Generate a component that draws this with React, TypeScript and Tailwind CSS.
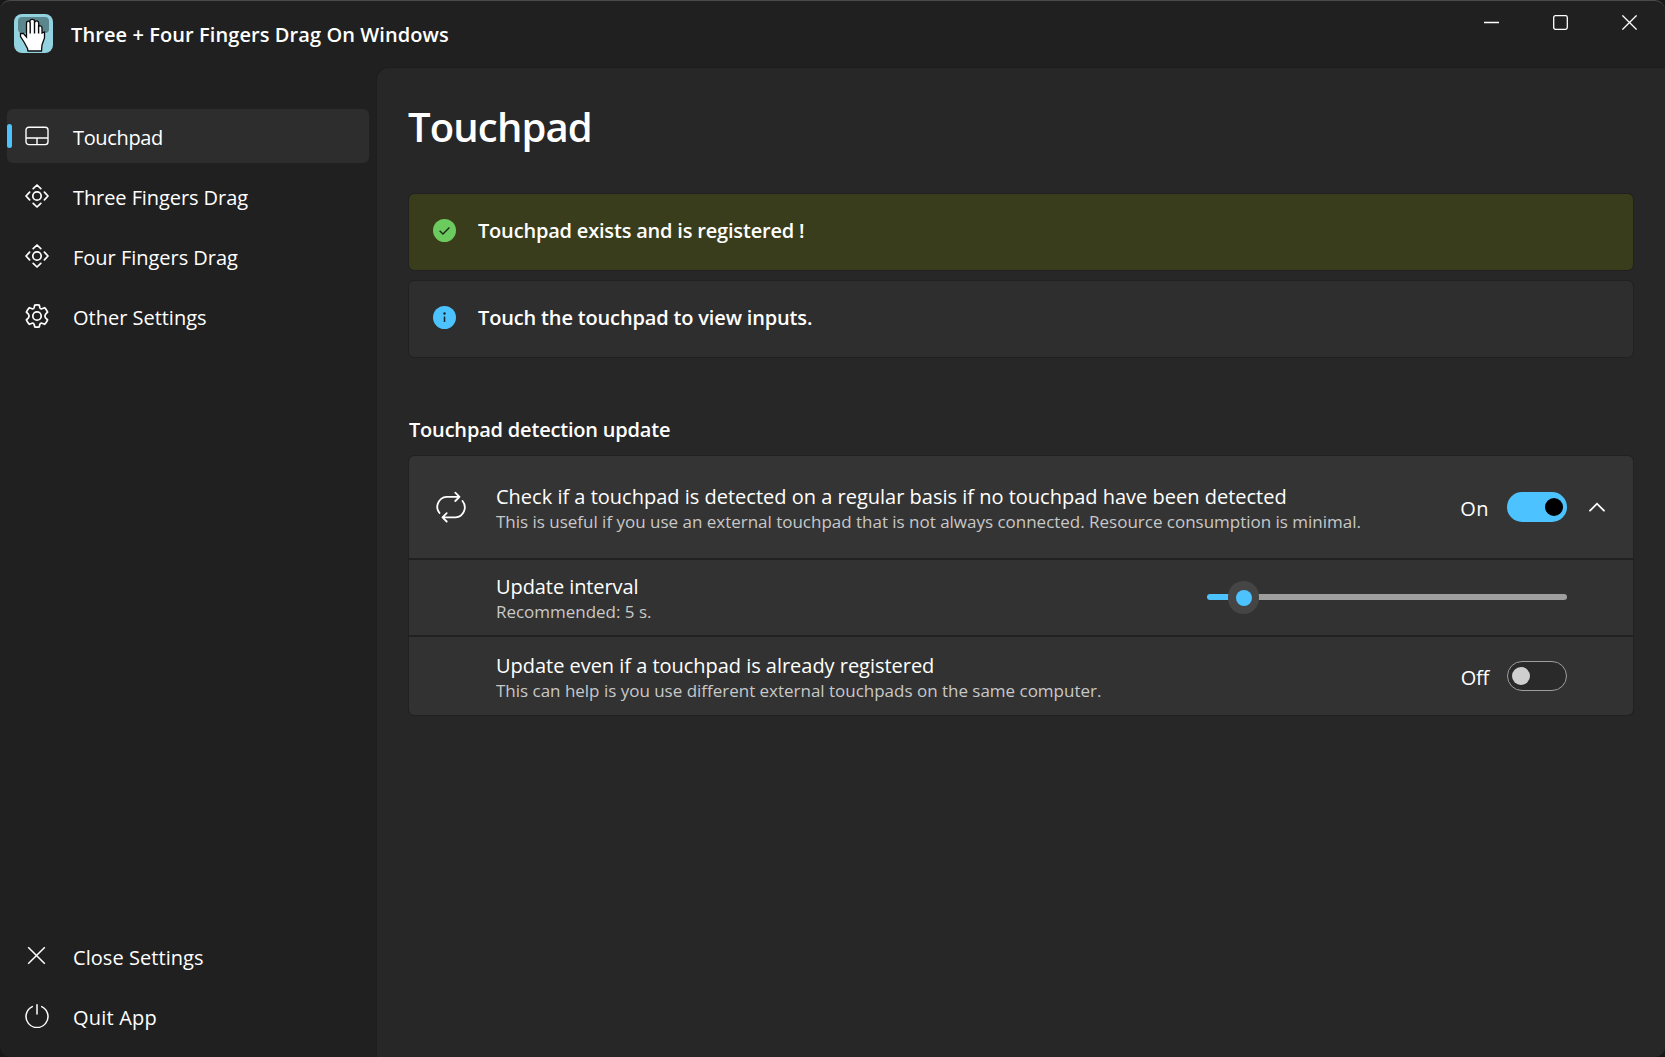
import type { ReactNode } from 'react';

/* ---------- icons ---------- */

function AppLogo() {
  return (
    <svg width="39" height="39" viewBox="0 0 39 39" className="shrink-0">
      <rect width="39" height="39" rx="8" fill="#93d3df" />
      <rect x="4" y="3" width="31" height="16" rx="4" fill="#5b868e" />
      <path
        d="M12.500 22V9.500Q12.500 7.200 14.300 7.200T16 9V7Q16 5.300 18.200 5.300T20.500 7V9Q20.500 6.800 22.500 6.800T24.700 9V12.500Q25 11.500 26.500 11.800T28 14V19L30.500 18V24L28 31L27.500 37H14L13.500 34.500L10 28L6.500 22.500L6.500 19.500H9.500L12.500 23Z"
        fill="#ffffff"
        stroke="#0a0a0a"
        strokeWidth="1.3"
      />
      <path d="M16.200 8.500V19.500M20.500 8.500V19.500M24.600 11V19.500" stroke="#0a0a0a" strokeWidth="1.4" fill="none" />
    </svg>
  );
}

function TouchpadIcon() {
  return (
    <svg width="24" height="24" viewBox="0 0 24 24" fill="none" stroke="#fff" strokeWidth="1.4">
      <rect x="1" y="3.2" width="22" height="17.4" rx="2.8" />
      <path d="M1 14H23M12 14V20.600" />
    </svg>
  );
}

function DragIcon() {
  return (
    <svg width="24" height="24" viewBox="0 0 24 24" fill="none" stroke="#fff" strokeWidth="1.7" strokeLinecap="round" strokeLinejoin="round">
      <circle cx="12" cy="12" r="4.2" />
      <path d="M8.200 4.600L12 1L15.800 4.600M8.200 19.400L12 23L15.800 19.400M4.600 8.200L1 12L4.600 15.800M19.400 8.200L23 12L19.400 15.800" />
    </svg>
  );
}

function GearIcon() {
  return (
    <svg width="24" height="24" viewBox="0 0 24 24" fill="none" stroke="#fff" strokeWidth="1.7" strokeLinejoin="round">
      <circle cx="12" cy="12" r="4.2" />
      <path d="M9.700 1.100Q12 .6 14.300 1.100L14.900 3.700Q15.400 5.100 17 4.700L19.600 3.700Q21.500 5.600 22.600 8.200L20.600 10.200Q19.300 12 20.600 13.800L22.600 15.800Q21.500 18.400 19.600 20.300L17 19.300Q15.400 18.900 14.900 20.300L14.300 22.900Q12 23.400 9.700 22.900L9.100 20.300Q8.600 18.900 7 19.300L4.400 20.300Q2.500 18.400 1.400 15.800L3.400 13.800Q4.700 12 3.400 10.200L1.400 8.200Q2.500 5.600 4.400 3.700L7 4.700Q8.600 5.100 9.100 3.700Z" />
    </svg>
  );
}

function CrossIcon() {
  return (
    <svg width="24" height="24" viewBox="0 0 24 24" fill="none" stroke="#fff" strokeWidth="1.5">
      <path d="M3.200 3.200L19.800 19.800M19.800 3.200L3.200 19.800" />
    </svg>
  );
}

function PowerIcon() {
  return (
    <svg width="24" height="24" viewBox="0 0 24 24" fill="none" stroke="#fff" strokeWidth="1.5" strokeLinecap="round">
      <path d="M12 .8V10M7.300 2.600A11 11 0 1 0 16.700 2.600" />
    </svg>
  );
}

function RepeatIcon() {
  return (
    <svg width="32" height="32" viewBox="0 0 32 32" fill="none" stroke="#fff" strokeWidth="1.8" strokeLinecap="round" strokeLinejoin="round">
      <path d="M4.500 22A10 10 0 0 1 11.500 5.800H24.500M20.300 1.600L24.500 5.800L20.300 10" />
      <path d="M27.500 10A10 10 0 0 1 20.500 26.300H7.500M11.700 22.100L7.500 26.300L11.700 30.500" />
    </svg>
  );
}

/* ---------- building blocks ---------- */

function NavItem({ icon, active, children }: { icon: ReactNode; active?: boolean; children: ReactNode }) {
  return (
    <button
      className={`relative flex h-[54px] w-[362px] items-center rounded-[6px] pl-[18px] text-left text-[20px] leading-[27px] text-white ${active ? 'bg-[#2d2d2d]' : ''}`}
    >
      {active && <span className="absolute left-0 top-[15px] h-6 w-[5px] rounded-full bg-[#4cc2ff]" />}
      <span className="flex size-6 items-center justify-center">{icon}</span>
      <span className="ml-6 pt-[2px]">{children}</span>
    </button>
  );
}

function InfoBar({ color, icon, children }: { color: string; icon: ReactNode; children: ReactNode }) {
  return (
    <div className={`flex h-[76px] items-start rounded-[5px] pl-6 pt-[25px] outline outline-1 outline-[#212121] ${color}`}>
      {icon}
      <span className="-mt-0.5 ml-[22px] text-[20px] font-semibold leading-[27px] text-white">{children}</span>
    </div>
  );
}

function Toggle({ on }: { on?: boolean }) {
  return on ? (
    <span className="flex h-[30px] w-[60px] items-center justify-end rounded-full bg-[#4cc2ff] pr-1">
      <span className="size-[18px] rounded-full bg-black" />
    </span>
  ) : (
    <span className="flex h-[30px] w-[60px] items-center rounded-full border-[1.5px] border-[#9e9e9e] bg-[#2a2a2a] pl-1">
      <span className="size-[18px] rounded-full bg-[#cfcfcf]" />
    </span>
  );
}

function RowText({ title, note }: { title: ReactNode; note: ReactNode }) {
  return (
    <div className="flex flex-col whitespace-nowrap">
      <span className="text-[20px] leading-[27px] text-white">{title}</span>
      <span className="text-[17px] leading-6 text-[#c8c8c8]">{note}</span>
    </div>
  );
}

/* ---------- page ---------- */

export default function App() {
  return (
    <div className="h-[1057px] w-[1665px] overflow-hidden bg-[#181818]">
      <div className="flex h-full flex-col overflow-hidden rounded-[10px] border-t border-[#4a4a4a] bg-[#202020] font-['Open_Sans','Noto_Sans',sans-serif]">
        <header className="flex h-[66px] shrink-0 items-start justify-between">
          <div className="flex items-center pl-[14px] pt-[13px]">
            <AppLogo />
            <h1 className="ml-[18px] pt-0.5 text-[20px] font-semibold leading-[27px] tracking-[0.086px] text-white">
              Three + Four Fingers Drag On Windows
            </h1>
          </div>
          <div className="flex pr-[1px]">
            <button className="flex h-[43px] w-[69px] items-center justify-center">
              <svg width="15" height="15" viewBox="0 0 15 15" stroke="#fff" strokeWidth="1.4"><path d="M0 7.500H15" /></svg>
            </button>
            <button className="flex h-[43px] w-[69px] items-center justify-center">
              <svg width="15" height="15" viewBox="0 0 15 15" stroke="#fff" strokeWidth="1.3" fill="none"><rect x=".7" y=".7" width="13.600" height="13.600" rx="1.8" /></svg>
            </button>
            <button className="flex h-[43px] w-[69px] items-center justify-center">
              <svg width="15" height="15" viewBox="0 0 15 15" stroke="#fff" strokeWidth="1.3"><path d="M.4 .4L14.600 14.600M14.600 .4L.4 14.600" /></svg>
            </button>
          </div>
        </header>

        <div className="flex min-h-0 flex-1">
          <nav className="flex w-[376px] shrink-0 flex-col justify-between pb-[14px] pl-[7px] pt-[42px]">
            <div className="flex flex-col gap-1.5">
              <NavItem active icon={<TouchpadIcon />}><span className="tracking-[-0.35px]">Touchpad</span></NavItem>
              <NavItem icon={<DragIcon />}><span className="tracking-[-0.08px]">Three Fingers Drag</span></NavItem>
              <NavItem icon={<DragIcon />}><span className="tracking-[-0.02px]">Four Fingers Drag</span></NavItem>
              <NavItem icon={<GearIcon />}><span className="tracking-[-0.014px]">Other Settings</span></NavItem>
            </div>
            <div className="flex flex-col gap-1.5">
              <NavItem icon={<CrossIcon />}><span className="tracking-[0.06px]">Close Settings</span></NavItem>
              <NavItem icon={<PowerIcon />}><span className="tracking-[0.203px]">Quit App</span></NavItem>
            </div>
          </nav>

          <main className="flex flex-1 flex-col rounded-tl-[12px] border-l border-t border-[#1d1d1d] bg-[#272727] pl-8 pr-8">
            <h2 className="-ml-[1px] mt-[31px] text-[40px] font-semibold leading-[56px] tracking-[-0.85px] text-white">Touchpad</h2>

            <div className="mt-[39px] flex flex-col gap-[11px]">
              <InfoBar
                color="bg-[#393d1b]"
                icon={
                  <svg width="23" height="23" viewBox="0 0 23 23" fill="none">
                    <circle cx="11.500" cy="11.500" r="11.500" fill="#6ccb5f" />
                    <path d="M6.600 11.700L10 15.100L16.400 8.500" stroke="#1b2a14" strokeWidth="1.4" />
                  </svg>
                }
              >
                <span className="tracking-[-0.191px]">Touchpad exists and is registered !</span>
              </InfoBar>
              <InfoBar
                color="bg-[#2e2e2e]"
                icon={
                  <svg width="23" height="23" viewBox="0 0 23 23">
                    <circle cx="11.500" cy="11.500" r="11.500" fill="#4cc2ff" />
                    <circle cx="11.500" cy="7.500" r="1.2" fill="#16222a" />
                    <path d="M11.500 10.500V16" stroke="#16222a" strokeWidth="1.5" />
                  </svg>
                }
              >
                <span className="tracking-[-0.16px]">Touch the touchpad to view inputs.</span>
              </InfoBar>
            </div>

            <h3 className="mt-[59px] text-[20px] font-semibold leading-[27px] tracking-[-0.192px] text-white">
              Touchpad detection update
            </h3>

            <section className="mt-[13px] flex flex-col gap-0.5 overflow-hidden rounded-[5px] bg-[#212121] outline outline-1 outline-[#212121]">
              <div className="flex h-[102px] items-center bg-[#343434] pl-[26px] pr-7">
                <RepeatIcon />
                <div className="ml-[29px] flex-1 pt-0.5">
                  <RowText
                    title={<span>Check if a touchpad is detected on a regular basis if no touchpad have been detected</span>}
                    note={<span className="tracking-[-0.014px]">This is useful if you use an external touchpad that is not always connected. Resource consumption is minimal.</span>}
                  />
                </div>
                <span className="mr-[18px] pt-[3px] text-[20px] leading-[27px] tracking-[0.5px] text-white">On</span>
                <Toggle on />
                <svg className="ml-[22px]" width="16" height="10" viewBox="0 0 16 10" fill="none" stroke="#fff" strokeWidth="1.8" strokeLinecap="round">
                  <path d="M1 8.700L8 1.700L15 8.700" />
                </svg>
              </div>

              <div className="flex h-[75px] items-center bg-[#323232] pl-[87px] pr-[66px]">
                <div className="flex-1 pt-0.5">
                  <RowText
                    title={<span className="tracking-[-0.08px]">Update interval</span>}
                    note={<span className="tracking-[-0.02px]">Recommended: 5 s.</span>}
                  />
                </div>
                <div className="relative mb-px flex h-8 w-[360px] items-center">
                  <span className="h-1.5 w-[36px] rounded-l-full bg-[#4cc2ff]" />
                  <span className="h-1.5 flex-1 rounded-r-full bg-[#9f9f9f]" />
                  <span className="absolute left-[21px] top-0 flex h-[33px] w-[31px] items-center justify-center rounded-full bg-[#454545]">
                    <span className="mt-px size-4 rounded-full bg-[#4cc2ff]" />
                  </span>
                </div>
              </div>

              <div className="flex h-[78px] items-center bg-[#323232] pl-[87px] pr-[66px]">
                <div className="flex-1 pt-0.5">
                  <RowText
                    title={<span className="tracking-[-0.03px]">Update even if a touchpad is already registered</span>}
                    note={<span className="tracking-[-0.014px]">This can help is you use different external touchpads on the same computer.</span>}
                  />
                </div>
                <span className="mr-[18px] pt-[3px] text-[20px] leading-[27px] tracking-[-0.278px] text-white">Off</span>
                <Toggle />
              </div>
            </section>
          </main>
        </div>
      </div>
    </div>
  );
}
